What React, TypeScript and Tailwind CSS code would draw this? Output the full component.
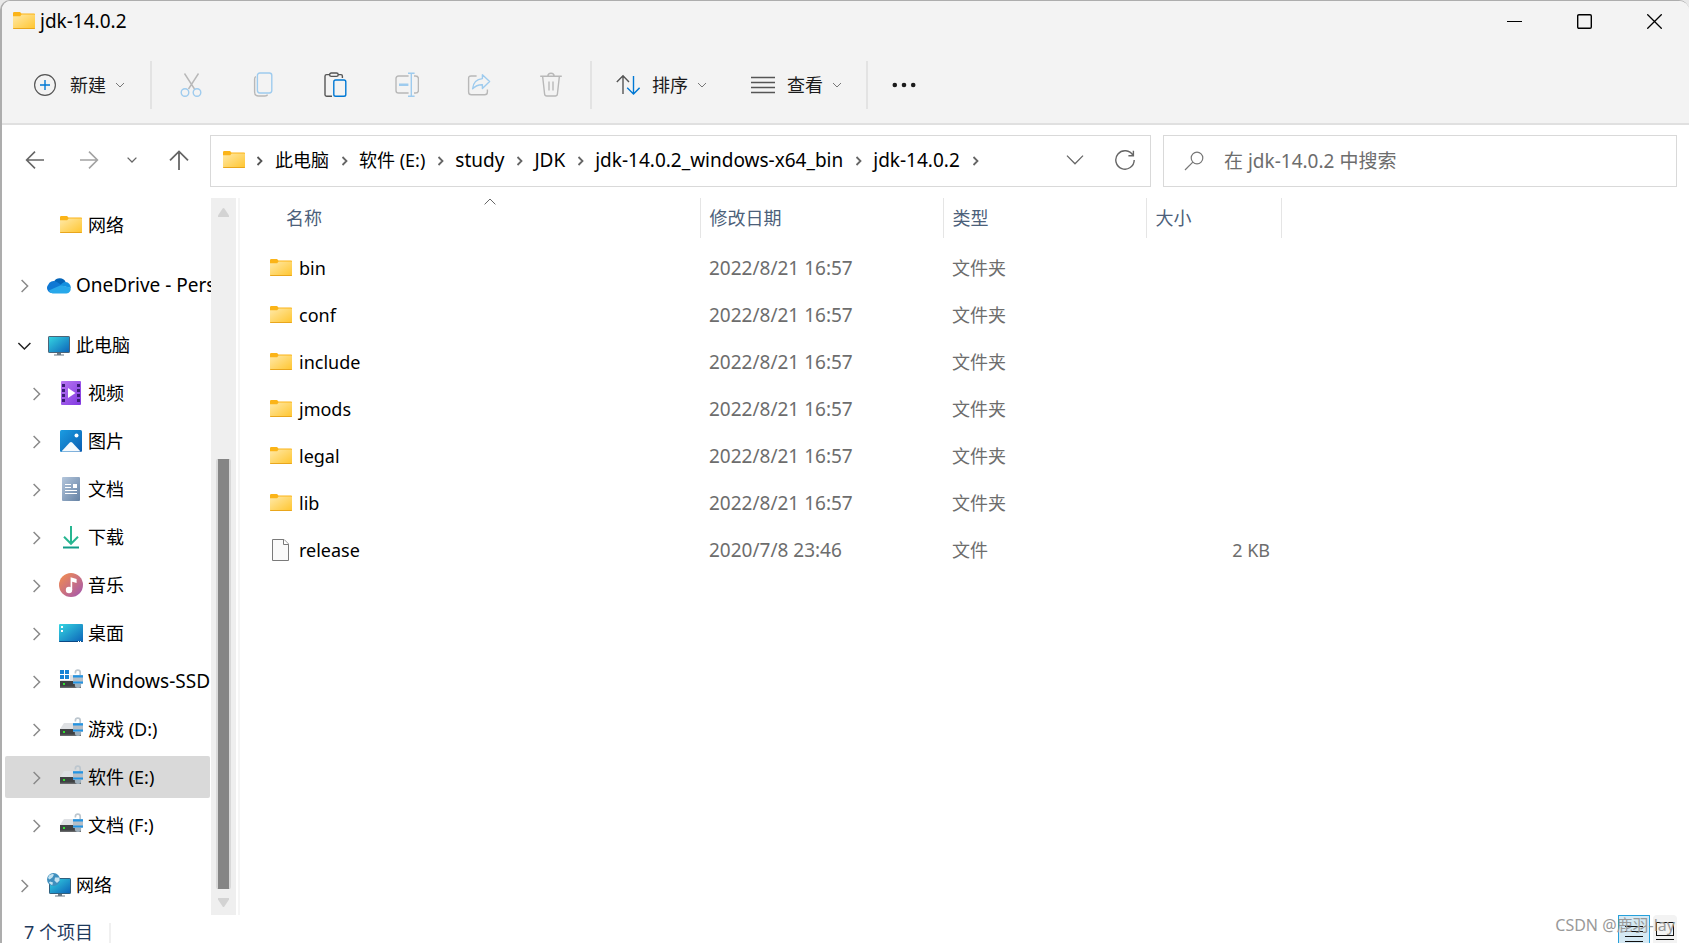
import React, { useState } from 'react';

const FolderIcon: React.FC = () => (
  <svg width="22" height="18" viewBox="0 0 22 18" className="shrink-0" aria-hidden="true">
    <defs>
      <linearGradient id="folderBody" x1="0" y1="0" x2="1" y2="1">
        <stop offset="0" stopColor="#ffe9a8" />
        <stop offset="1" stopColor="#ffc52e" />
      </linearGradient>
    </defs>
    <path d="M0 1.2Q0 0 1.2 0H6.6Q7.4 0 7.8.8L8.4 1.6H21.2Q22 1.6 22 2.4V6H0Z" fill="#fbb418" />
    <path d="M0 4.2H7.2L8.6 2.6H21.4Q22 2.6 22 3.2V16.2Q22 17 21.2 17H.8Q0 17 0 16.2Z" fill="url(#folderBody)" />
    <path d="M0 16H22Q22 17 21.2 17H.8Q0 17 0 16Z" fill="#e9a61c" />
  </svg>
);

const FileIcon: React.FC = () => (
  <svg width="22" height="24" viewBox="0 0 22 24" className="shrink-0" aria-hidden="true">
    <path d="M2.5 1.5H14L18.5 6V22.5H2.5Z" fill="#fafafa" stroke="#7a7a7a" />
    <path d="M13.5 1.5V6.5H18.5" fill="#fff" stroke="#7a7a7a" />
  </svg>
);

const CloudIcon: React.FC = () => (
  <svg width="24" height="24" viewBox="0 0 24 24" aria-hidden="true">
    <path d="M7 8.6A6.6 6.6 0 0 1 18.6 9L13 14Z" fill="#0364b8" />
    <path d="M5 20A5 5 0 0 1 1.2 11.8 5.6 5.6 0 0 1 9 8.6L18 14 6 20Z" fill="#0f78d4" />
    <path d="M13.5 12.4A6 6 0 0 1 18.6 9 5.6 5.6 0 0 1 23.8 15Z" fill="#1490df" />
    <path d="M1.8 17.6 13.6 12.2 23.4 14.4A4.4 4.4 0 0 1 19.4 20.4H5.6A5 5 0 0 1 1.8 17.6Z" fill="#28a8ea" />
  </svg>
);

const ScreenGradient: React.FC<{ id: string }> = ({ id }) => (
  <defs>
    <linearGradient id={id} x1="0" y1="0" x2="1" y2="1">
      <stop offset="0" stopColor="#35d6e2" />
      <stop offset="1" stopColor="#0c62b8" />
    </linearGradient>
  </defs>
);

const ComputerIcon: React.FC = () => (
  <svg width="24" height="24" viewBox="0 0 24 24" aria-hidden="true">
    <ScreenGradient id="pcScreen" />
    <rect x="1.5" y="3.5" width="21" height="16" rx=".6" fill="url(#pcScreen)" stroke="#4b6478" />
    <path d="M10 20H14V21.4H17V22.4H7V21.4H10Z" fill="#6b7984" />
  </svg>
);

const VideoIcon: React.FC = () => (
  <svg width="24" height="24" viewBox="0 0 24 24" aria-hidden="true">
    <defs>
      <linearGradient id="videoBody" x1="0" y1="0" x2="1" y2="1">
        <stop offset="0" stopColor="#b876f2" />
        <stop offset="1" stopColor="#8038e0" />
      </linearGradient>
    </defs>
    <rect x="2" width="20" height="24" rx="1" fill="url(#videoBody)" />
    {[3, 8, 13, 18].map((y) => (
      <g key={y} fill="#3c1d78">
        <rect x="3" y={y} width="3" height="3" />
        <rect x="18" y={y} width="3" height="3" />
      </g>
    ))}
    <path d="M9 7V17L16.5 12Z" fill="#fff" />
  </svg>
);

const PictureIcon: React.FC = () => (
  <svg width="24" height="24" viewBox="0 0 24 24" aria-hidden="true">
    <defs>
      <linearGradient id="picBody" x1="0" y1="0" x2="1" y2="1">
        <stop offset="0" stopColor="#1b9de2" />
        <stop offset="1" stopColor="#0a5cb0" />
      </linearGradient>
    </defs>
    <rect x="1" y="1" width="22" height="22" rx="1.5" fill="url(#picBody)" />
    <path d="M2.4 22.4 10.8 13.6Q12 12.4 13.2 13.6L21.6 22.4Z" fill="#f4f9fd" />
    <circle cx="17.5" cy="6.5" r="2" fill="#fff" />
  </svg>
);

const DocumentIcon: React.FC = () => (
  <svg width="24" height="24" viewBox="0 0 24 24" aria-hidden="true">
    <defs>
      <linearGradient id="docBody" x1="0" y1="0" x2="1" y2="1">
        <stop offset="0" stopColor="#b4c6dc" />
        <stop offset="1" stopColor="#6582a4" />
      </linearGradient>
    </defs>
    <rect x="3" width="18" height="24" rx="1" fill="url(#docBody)" />
    <path d="M6 7.5H12M6 10.5H12M6 13.5H18M6 16.5H18" stroke="#fff" />
    <rect x="14" y="7" width="4" height="4" fill="#fff" />
  </svg>
);

const DownloadIcon: React.FC = () => (
  <svg width="24" height="24" viewBox="0 0 24 24" fill="none" aria-hidden="true">
    <path d="M12 1V18.5M5 11.8 12 18.8 19 11.8" stroke="#27b691" strokeWidth="2" />
    <path d="M4 22.5H20" stroke="#139c88" strokeWidth="2" />
  </svg>
);

const MusicIcon: React.FC = () => (
  <svg width="24" height="24" viewBox="0 0 24 24" aria-hidden="true">
    <defs>
      <linearGradient id="musicBody" x1="0" y1="0" x2="1" y2="1">
        <stop offset="0.1" stopColor="#ee8a55" />
        <stop offset="0.9" stopColor="#a95aa8" />
      </linearGradient>
    </defs>
    <circle cx="12" cy="12" r="12" fill="url(#musicBody)" />
    <circle cx="10" cy="17" r="3.2" fill="#fff" />
    <path d="M11.6 17V4.2L17.6 6V10L13.2 8.8V17Z" fill="#fff" />
  </svg>
);

const DesktopIcon: React.FC = () => (
  <svg width="24" height="24" viewBox="0 0 24 24" aria-hidden="true">
    <ScreenGradient id="deskScreen" />
    <rect y="3" width="24" height="18" rx="1" fill="url(#deskScreen)" />
    <path d="M0 20H24Q24 21 23 21H1Q0 21 0 20Z" fill="#0b4a86" />
    <path d="M2 5H4V7H2ZM2 9H4V11H2Z" fill="#fff" />
    <path d="M19 20H20V21H19ZM21 20H22V21H21Z" fill="#fff" />
  </svg>
);

const DriveIcon: React.FC<{ system?: boolean }> = ({ system }) => (
  <svg width="24" height="24" viewBox="0 0 24 24" aria-hidden="true">
    <path d="M5 6H20L22.5 12H1Z" fill="#dfe1e4" />
    <rect x="1" y="12" width="21" height="7" fill="#3f4143" />
    <rect x="1" y="17.6" width="21" height="1.4" fill="#66686a" />
    <rect x="4" y="14" width="2" height="2" fill="#2fe02f" />
    {system && (
      <>
        <path d="M0 0H11V11H0Z" fill="#fff" />
        <path d="M1 1H5V5H1ZM6 1H10V5H6ZM1 6H5V10H1ZM6 6H10V10H6Z" fill="#1583d6" />
      </>
    )}
    <path d="M16.4 4.6V3.4Q16.4 1.2 18.8 1.2T21.2 3.4V7" fill="none" stroke="#bcc6ce" strokeWidth="1.7" />
    <circle cx="19" cy="15.8" r="3.2" fill="#9fb0bd" />
    <rect x="14" y="6" width="10" height="9" rx=".8" fill="#b6bec6" />
    <path d="M14 6.2H24V8.6H14ZM14 12.4H24V14.6H14Z" fill="#2294e4" />
  </svg>
);

const NetworkIcon: React.FC = () => (
  <svg width="24" height="24" viewBox="0 0 24 24" aria-hidden="true">
    <ScreenGradient id="netScreen" />
    <rect x="2.5" y="5.5" width="21" height="15" rx=".6" fill="url(#netScreen)" stroke="#31607e" />
    <path d="M11 21H15V22.6H18V23.6H8V22.6H11Z" fill="#6b7984" />
    <circle cx="6.5" cy="6.5" r="6.5" fill="#3f8fbe" />
    <path d="M2 2.6Q5 0 7 1.4L5.4 4.4 2.6 6.4 1 5ZM8 4.4 12.4 4.6 12.6 7.6 10 10 7.4 7.4ZM3 8.6 6 9.6 5.2 12.2Q3 11.4 2 9.6Z" fill="#c3e2f0" />
  </svg>
);

const Chevron: React.FC<{ dir: 'right' | 'down'; className?: string }> = ({ dir, className }) => (
  <svg width="16" height="16" viewBox="0 0 16 16" fill="none" stroke="currentColor" className={className} aria-hidden="true">
    {dir === 'right' ? <path d="M4.6 3 10.6 9 4.6 15" strokeWidth="1.5" /> : <path d="M1.4 6 7.4 12 13.4 6" strokeWidth="1.5" />}
  </svg>
);

const SmallChevron: React.FC = () => (
  <svg width="10" height="8" viewBox="0 0 10 8" fill="none" stroke="#777" aria-hidden="true">
    <path d="M1 2 5 6 9 2" />
  </svg>
);

const Separator: React.FC = () => <div className="h-12 w-0.5 bg-[#e3e3e3]" />;

// Latin names run a touch larger than the CJK ones
const nameSize = (name: string) => (/^[a-z]/i.test(name) ? 'text-[19px]' : 'text-lg');

// Toolbar actions; greyed ones have nothing selected to act on
const actions = [
  {
    label: '剪切',
    disabled: true,
    icon: (
      <>
        <path d="M5.5 1.5 15.5 17M19.5 1.5 9.5 17" stroke="#b8b8b8" />
        <circle cx="6" cy="20.5" r="3.8" stroke="#9ecbee" />
        <circle cx="18" cy="20.5" r="3.8" stroke="#9ecbee" />
      </>
    ),
  },
  {
    label: '复制',
    disabled: true,
    icon: (
      <>
        <path d="M5 4.6Q3.6 5 3.6 7V20Q3.6 24 7.6 24H14Q16 24 16.6 22.6" stroke="#b8b8b8" />
        <rect x="6.4" y="1" width="14.4" height="20" rx="2.4" stroke="#9ecbee" />
      </>
    ),
  },
  {
    label: '粘贴',
    disabled: false,
    icon: (
      <>
        <path d="M7 2.6H3.6Q2 2.6 2 4.2V22.8Q2 24.2 3.6 24.2H9M15 2.6H18Q19.4 2.6 19.4 4.2V6" stroke="#555" />
        <rect x="6.6" y="1" width="8.6" height="3.4" rx="1.7" stroke="#555" />
        <rect x="10.8" y="8" width="12" height="16.2" rx="1.8" stroke="#0078d4" />
      </>
    ),
  },
  {
    label: '重命名',
    disabled: true,
    icon: (
      <>
        <path d="M13.6 4H3.6Q1 4 1 6.6V18.4Q1 21 3.6 21H13.6M19 4H20.4Q23.4 4 23.4 6.6V18.4Q23.4 21 20.4 21H19" stroke="#b8b8b8" />
        <path d="M4 12.8H13.4" stroke="#9ecbee" strokeWidth="2.4" />
        <path d="M13 1.2H19.6M13 24.2H19.6M16.3 1.2V24.2" stroke="#9ecbee" />
      </>
    ),
  },
  {
    label: '共享',
    disabled: true,
    icon: (
      <>
        <path d="M9.6 4H4Q1.6 4 1.6 6.4V20Q1.6 22.8 4.4 22.8H17.6Q20.4 22.8 20.4 20V17.6" stroke="#b8b8b8" />
        <path d="M15.4 2.8 22.6 9.6 15.4 16.4V12.8Q9.6 12.6 5.6 16.8 6.4 7.4 15.4 6.6Z" stroke="#9ecbee" strokeLinejoin="round" />
      </>
    ),
  },
  {
    label: '删除',
    disabled: true,
    icon: (
      <path
        d="M1.2 4.2H22.8M3.6 4.2 5.6 22Q5.8 24 7.8 24H16.2Q18.2 24 18.4 22L20.4 4.2M8.8 4.2Q9 1.2 12 1.2T15.2 4.2M10 9.6V18.6M14 9.6V18.6"
        stroke="#b8b8b8"
      />
    ),
  },
];

const Toolbar: React.FC = () => (
  <div className="flex items-center pt-5 pb-3.5 text-[#1b1b1b]">
    <button type="button" className="flex h-12 w-[148px] items-center pl-8">
      <svg width="22" height="22" viewBox="0 0 22 22" fill="none" aria-hidden="true">
        <circle cx="11" cy="11" r="10.4" stroke="#555" strokeWidth="1.2" />
        <path d="M11 6V16M6 11H16" stroke="#0078d4" strokeWidth="1.4" />
      </svg>
      <span className="mr-[9px] ml-3.5">新建</span>
      <SmallChevron />
    </button>
    <Separator />
    <div className="mx-[3px] flex">
      {actions.map((a) => (
        <button key={a.label} type="button" aria-label={a.label} disabled={a.disabled} className="flex h-12 w-18 items-center justify-center pb-0.5">
          <svg width="24" height="25" viewBox="0 0 24 25" fill="none" strokeWidth="1.4" aria-hidden="true">
            {a.icon}
          </svg>
        </button>
      ))}
    </div>
    <Separator />
    <button type="button" className="flex h-12 items-center pr-6 pl-6">
      <svg width="24" height="22" viewBox="0 0 24 22" fill="none" strokeWidth="1.4" aria-hidden="true">
        <path d="M7 20V2M.8 8 7 1.8 13 8" stroke="#555" />
        <path d="M17.5 2V20M11.2 13.8 17.5 20 23.6 13.8" stroke="#0078d4" />
      </svg>
      <span className="mr-[9px] ml-3">排序</span>
      <SmallChevron />
    </button>
    <button type="button" className="flex h-12 items-center pr-6 pl-5">
      <svg width="24" height="18" viewBox="0 0 24 18" stroke="#555" strokeWidth="1.4" aria-hidden="true">
        <path d="M0 1.5H24M0 6.5H24M0 11.5H24M0 16.5H24" />
      </svg>
      <span className="mr-[9px] ml-3">查看</span>
      <SmallChevron />
    </button>
    <Separator />
    <button type="button" aria-label="更多" className="flex h-12 w-18 items-center justify-center">
      <svg width="24" height="6" viewBox="0 0 24 6" fill="#1b1b1b" aria-hidden="true">
        <circle cx="2.8" cy="3" r="2.3" />
        <circle cx="12" cy="3" r="2.3" />
        <circle cx="21.2" cy="3" r="2.3" />
      </svg>
    </button>
  </div>
);

const crumbs = ['此电脑', '软件 (E:)', 'study', 'JDK', 'jdk-14.0.2_windows-x64_bin', 'jdk-14.0.2'];

const AddressBar: React.FC = () => (
  <div className="flex items-center pt-2.5 pr-3 pb-[11px]">
    <div className="flex w-52 shrink-0 items-center pb-0.5">
      <button type="button" aria-label="后退" className="ml-2 flex h-12 w-[50px] items-center justify-center">
        <svg width="20" height="20" viewBox="0 0 20 20" fill="none" stroke="#666" strokeWidth="1.6" aria-hidden="true">
          <path d="M19 10H2M10 1.6 1.6 10 10 18.4" />
        </svg>
      </button>
      <button type="button" aria-label="前进" className="ml-1 flex h-12 w-[50px] items-center justify-center">
        <svg width="20" height="20" viewBox="0 0 20 20" fill="none" stroke="#a3a3a3" strokeWidth="1.6" aria-hidden="true">
          <path d="M1 10H18M10 1.6 18.4 10 10 18.4" />
        </svg>
      </button>
      <button type="button" aria-label="最近的位置" className="flex h-12 w-9 items-center justify-center">
        <svg width="10" height="8" viewBox="0 0 10 8" fill="none" stroke="#666" strokeWidth="1.3" aria-hidden="true">
          <path d="M.6 1.6 5 6 9.4 1.6" />
        </svg>
      </button>
      <button type="button" aria-label="上移" className="ml-1 flex h-12 w-[50px] items-center justify-center">
        <svg width="20" height="20" viewBox="0 0 20 20" fill="none" stroke="#666" strokeWidth="1.8" aria-hidden="true">
          <path d="M10 20V2M1 10.4 10 1.4 19 10.4" />
        </svg>
      </button>
    </div>

    <nav aria-label="地址" className="flex h-[52px] min-w-0 flex-1 items-center border border-[#d9d9d9] pb-0.5 pl-3">
      <FolderIcon />
      <svg width="30" height="12" viewBox="0 0 30 12" fill="none" stroke="#555" strokeWidth="1.8" className="shrink-0" aria-hidden="true">
        <path d="M12.5 3 16.5 7 12.5 11" />
      </svg>
      {crumbs.map((crumb) => (
        <React.Fragment key={crumb}>
          <button type="button" className={`whitespace-nowrap ${nameSize(crumb)}`}>
            {crumb}
          </button>
          <svg width="30" height="12" viewBox="0 0 30 12" fill="none" stroke="#666" strokeWidth="1.8" className="shrink-0" aria-hidden="true">
            <path d="M13.5 3 17.5 7 13.5 11" />
          </svg>
        </React.Fragment>
      ))}
      <button type="button" aria-label="以前的位置" className="ml-auto flex h-12 w-[50px] items-center justify-center">
        <svg width="18" height="12" viewBox="0 0 18 12" fill="none" stroke="#666" strokeWidth="1.3" aria-hidden="true">
          <path d="M1 1.6 9 9.8 17 1.6" />
        </svg>
      </button>
      <button type="button" aria-label="刷新" className="flex h-12 w-[50px] items-center justify-center">
        <svg width="20" height="20" viewBox="0 0 20 20" fill="none" stroke="#666" strokeWidth="1.4" aria-hidden="true">
          <path d="M18 5.4A9.2 9.2 0 1 0 19.2 10M18.4 .8V5.8H13.4" />
        </svg>
      </button>
    </nav>

    <label className="ml-3 flex h-[52px] w-[514px] items-center border border-[#d9d9d9] pl-5">
      <svg width="20" height="20" viewBox="0 0 20 20" fill="none" stroke="#777" strokeWidth="1.2" aria-hidden="true">
        <circle cx="13" cy="7" r="5.8" />
        <path d="M8.8 11.2 1 19" />
      </svg>
      <input
        type="text"
        aria-label="搜索"
        placeholder="在 jdk-14.0.2 中搜索"
        className="ml-5 min-w-0 flex-1 text-[19px] outline-none placeholder:text-[#6d6d6d]"
      />
    </label>
  </div>
);

const tree = [
  { name: '网络', icon: <FolderIcon />, level: 1, arrow: '', gap: false },
  { name: 'OneDrive - Pers', icon: <CloudIcon />, level: 0, arrow: 'right', gap: true },
  { name: '此电脑', icon: <ComputerIcon />, level: 0, arrow: 'down', gap: true },
  { name: '视频', icon: <VideoIcon />, level: 1, arrow: 'right', gap: false },
  { name: '图片', icon: <PictureIcon />, level: 1, arrow: 'right', gap: false },
  { name: '文档', icon: <DocumentIcon />, level: 1, arrow: 'right', gap: false },
  { name: '下载', icon: <DownloadIcon />, level: 1, arrow: 'right', gap: false },
  { name: '音乐', icon: <MusicIcon />, level: 1, arrow: 'right', gap: false },
  { name: '桌面', icon: <DesktopIcon />, level: 1, arrow: 'right', gap: false },
  { name: 'Windows-SSD', icon: <DriveIcon system />, level: 1, arrow: 'right', gap: false },
  { name: '游戏 (D:)', icon: <DriveIcon />, level: 1, arrow: 'right', gap: false },
  { name: '软件 (E:)', icon: <DriveIcon />, level: 1, arrow: 'right', gap: false },
  { name: '文档 (F:)', icon: <DriveIcon />, level: 1, arrow: 'right', gap: false },
  { name: '网络', icon: <NetworkIcon />, level: 0, arrow: 'right', gap: true },
];

const Sidebar: React.FC = () => {
  const [selected, setSelected] = useState(11);

  return (
    <aside className="flex shrink-0 border-r-2 border-[#f5f5f5] pr-0.5">
      <ul className="w-[209px] pt-[3px] pr-px pb-1.5 pl-[3px]">
        {tree.map((node, i) => (
          <li key={i} className={node.gap ? 'mt-3 py-[3px]' : 'py-[3px]'}>
            <button
              type="button"
              onClick={() => setSelected(i)}
              className={`flex h-[42px] w-full items-center rounded-xs text-left ${node.level ? 'pl-6' : 'pl-3'} ${
                i === selected ? 'bg-[#d9d9d9]' : ''
              }`}
            >
              <span className="w-[30px] shrink-0">
                {node.arrow && (
                  <Chevron dir={node.arrow === 'down' ? 'down' : 'right'} className={node.arrow === 'down' ? 'text-[#222]' : 'text-[#8a8a8a]'} />
                )}
              </span>
              <span className="mr-[5px] flex w-6 shrink-0 justify-center">{node.icon}</span>
              <span className={`whitespace-nowrap ${nameSize(node.name)}`}>{node.name}</span>
            </button>
          </li>
        ))}
      </ul>
      <div className="flex w-[25px] flex-col items-center bg-[#efefef] pt-2.5 pb-2" aria-hidden="true">
        <svg width="11" height="9" viewBox="0 0 11 9" fill="#d3d3d3">
          <path d="M4.6.6Q5.5-.4 6.4.6L11 7.4V9H0V7.4Z" />
        </svg>
        <div className="flex-1" />
        <div className="h-[430px] w-[15px] rounded-xs border-x-2 border-[#d9d9d9] bg-[#858585]" />
        <svg width="11" height="9" viewBox="0 0 11 9" fill="#d3d3d3" className="mt-[9px]">
          <path d="M4.6 8.4Q5.5 9.4 6.4 8.4L11 1.6V0H0V1.6Z" />
        </svg>
      </div>
    </aside>
  );
};

const files = [
  { name: 'bin', date: '2022/8/21 16:57', type: '文件夹', size: '' },
  { name: 'conf', date: '2022/8/21 16:57', type: '文件夹', size: '' },
  { name: 'include', date: '2022/8/21 16:57', type: '文件夹', size: '' },
  { name: 'jmods', date: '2022/8/21 16:57', type: '文件夹', size: '' },
  { name: 'legal', date: '2022/8/21 16:57', type: '文件夹', size: '' },
  { name: 'lib', date: '2022/8/21 16:57', type: '文件夹', size: '' },
  { name: 'release', date: '2020/7/8 23:46', type: '文件', size: '2 KB' },
];

const FileTable: React.FC = () => (
  <div className="min-w-0 flex-1">
    <table className="w-full table-fixed text-left text-[#6d6d6d]">
      <colgroup>
        <col className="w-[460px]" />
        <col className="w-[243px]" />
        <col className="w-[203px]" />
        <col className="w-[135px]" />
        <col />
      </colgroup>
      <thead className="text-[#4c607a]">
        <tr className="h-10">
          <th scope="col" aria-sort="ascending" className="relative border-r border-[#e5e5e5] pl-[46px] font-normal">
            名称
            <svg width="12" height="7" viewBox="0 0 12 7" fill="none" stroke="#666" className="absolute top-0 left-1/2 ml-3.5" aria-hidden="true">
              <path d="M.6 6.4 6 1 11.4 6.4" />
            </svg>
          </th>
          <th scope="col" className="border-r border-[#e5e5e5] pl-[9px] font-normal">修改日期</th>
          <th scope="col" className="border-r border-[#e5e5e5] pl-[9px] font-normal">类型</th>
          <th scope="col" className="border-r border-[#e5e5e5] pl-[9px] font-normal">大小</th>
          <td />
        </tr>
      </thead>
      <tbody>
        <tr className="h-1.5" aria-hidden="true">
          <td colSpan={5} />
        </tr>
        {files.map((file) => (
          <tr key={file.name} className="h-[47px]">
            <td className="pl-[30px] text-black">
              <span className="flex items-center gap-[7px]">
                {file.size ? <FileIcon /> : <FolderIcon />}
                {file.name}
              </span>
            </td>
            <td className="pl-[9px] text-[19px]">{file.date}</td>
            <td className="pl-[9px]">{file.type}</td>
            <td className="pr-[11px] text-right">{file.size}</td>
            <td />
          </tr>
        ))}
      </tbody>
    </table>
  </div>
);

const StatusBar: React.FC = () => (
  <footer className="relative flex h-7 items-start overflow-hidden pr-3 pl-[22px] text-[#1e395b]">
    <span className="pt-[5px]">7 个项目</span>
    <div className="mt-2 ml-4 h-5 w-0.5 bg-[#f0f0f0]" />
    <button type="button" aria-label="详细信息" className="ml-auto flex h-9 w-8 shrink-0 justify-center border border-[#26a0da] bg-[#d5e9f4] pt-2">
      <svg width="18" height="20" viewBox="0 0 18 20" stroke="#111" aria-hidden="true">
        <path d="M0 2.5H18M0 7.5H18M0 12.5H18M0 17.5H18" />
      </svg>
    </button>
    <button type="button" aria-label="大缩略图" className="ml-[3px] flex h-9 w-6 shrink-0 justify-center rounded-sm bg-[#f3f3f3] pt-1.5">
      <svg width="18" height="20" viewBox="0 0 18 20" fill="none" stroke="#111" aria-hidden="true">
        <rect x=".5" y="1.5" width="17" height="13" />
        <path d="M0 18.5H18" />
      </svg>
    </button>
    <span className="absolute right-3.5 bottom-2 text-base leading-5 whitespace-nowrap text-[#999]">CSDN @鹿羽-lay</span>
  </footer>
);

export default function App() {
  return (
    <div className="bg-[#e8e8e8]">
      <div className="flex min-h-screen flex-col overflow-hidden rounded-t-[10px] border-t border-l-2 border-[#adadad] bg-white font-['Noto_Sans','Noto_Sans_CJK_SC',sans-serif] text-lg leading-6 text-black">
        <header className="border-b-2 border-[#e0e0e0] bg-[#f3f3f3]">
          <div className="flex h-10 items-center pl-[11px]">
            <FolderIcon />
            <h1 className="ml-[5px] text-[19px]">jdk-14.0.2</h1>
            <div className="ml-auto flex">
              <button type="button" aria-label="最小化" className="flex h-10 w-[70px] items-center justify-center">
                <svg width="15" height="15" viewBox="0 0 15 15" stroke="#000" aria-hidden="true">
                  <path d="M0 7.5H15" />
                </svg>
              </button>
              <button type="button" aria-label="最大化" className="flex h-10 w-[70px] items-center justify-center">
                <svg width="15" height="15" viewBox="0 0 15 15" fill="none" stroke="#000" strokeWidth="1.4" aria-hidden="true">
                  <rect x=".7" y=".7" width="13.6" height="13.6" rx="1.2" />
                </svg>
              </button>
              <button type="button" aria-label="关闭" className="flex h-10 w-[70px] items-center justify-center">
                <svg width="15" height="15" viewBox="0 0 15 15" stroke="#000" strokeWidth="1.3" aria-hidden="true">
                  <path d="M.3 .3 14.7 14.7M14.7 .3 .3 14.7" />
                </svg>
              </button>
            </div>
          </div>
          <Toolbar />
        </header>
        <AddressBar />
        <main className="flex flex-1">
          <Sidebar />
          <FileTable />
        </main>
        <StatusBar />
      </div>
    </div>
  );
}
